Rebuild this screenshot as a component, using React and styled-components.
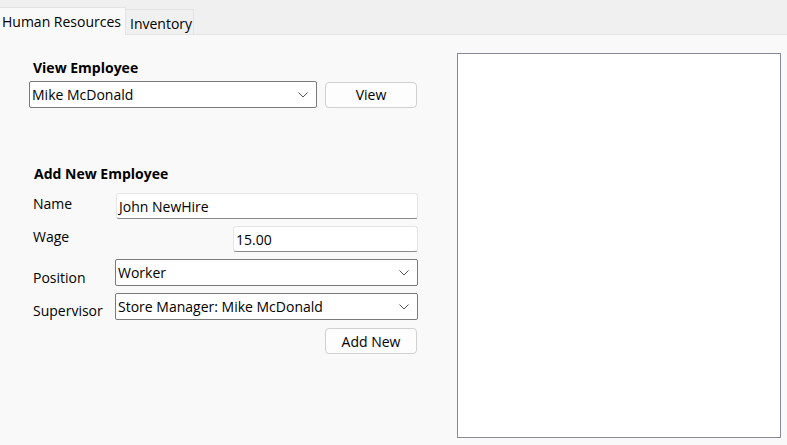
import React from "react";
import styled, { createGlobalStyle } from "styled-components";

const GlobalStyle = createGlobalStyle`
  html, body {
    margin: 0;
    padding: 0;
    background: #f9f9f9;
  }
  body {
    font-family: "Open Sans", "Noto Sans", sans-serif;
    font-size: 14px;
    color: #000;
  }
`;

const Window = styled.div`
  width: 787px;
  height: 445px;
  display: flex;
  flex-direction: column;
  background: #f9f9f9;
  overflow: hidden;
`;

const TabBar = styled.div`
  height: 35px;
  flex-shrink: 0;
  display: flex;
  align-items: flex-end;
  background: #f0f0f0;
  border-bottom: 1px solid #e3e3e3;
  box-sizing: border-box;
`;

const Tab = styled.div`
  height: ${(p) => (p.$active ? "28px" : "25px")};
  width: ${(p) => (p.$active ? "126px" : "69px")};
  padding-left: ${(p) => (p.$active ? "2px" : "4px")};
  padding-top: ${(p) => (p.$active ? "0" : "3px")};
  box-sizing: border-box;
  display: flex;
  align-items: center;
  background: ${(p) => (p.$active ? "#f9f9f9" : "#f0f0f0")};
  border: 1px solid #e3e3e3;
  border-bottom: none;
  border-left: ${(p) => (p.$active ? "none" : "1px solid #e3e3e3")};
  margin-bottom: ${(p) => (p.$active ? "-1px" : "0")};
  margin-left: ${(p) => (p.$active ? "0" : "-1px")};
  font-size: 14px;
  position: relative;
  z-index: ${(p) => (p.$active ? 1 : 0)};
`;

const Body = styled.div`
  flex: 1;
  display: flex;
  padding: 18px 6px 7px 29px;
  box-sizing: border-box;
`;

const LeftPane = styled.div`
  width: 389px;
  padding-top: 5px;
  display: flex;
  flex-direction: column;
`;

const Heading = styled.div`
  font-weight: 700;
  font-size: 14px;
  padding-left: ${(p) => p.$indent}px;
  margin-top: ${(p) => p.$top}px;
  height: 20px;
  line-height: 20px;
`;

const Row = styled.div`
  display: flex;
  align-items: center;
  gap: 8px;
  margin-top: 3px;
`;

const ComboBox = styled.div`
  width: ${(p) => p.$width}px;
  height: 27px;
  box-sizing: border-box;
  display: flex;
  align-items: center;
  justify-content: space-between;
  background: #fff;
  border: 1px solid #7a7a7a;
  border-radius: 2px;
  padding: 0 8px 0 2px;
  font-size: 14px;
`;

const Button = styled.button`
  width: 92px;
  height: 26px;
  box-sizing: border-box;
  background: #fdfdfd;
  border: 1px solid #d0d0d0;
  border-radius: 4px;
  font-family: inherit;
  font-size: 14px;
  color: #000;
  padding: 0;
  justify-self: end;
  margin-right: ${(p) => p.$right || 0}px;
  margin-top: ${(p) => p.$top || 0}px;
`;

const Form = styled.div`
  display: grid;
  grid-template-columns: 86px 303px;
  grid-template-rows: 26px 26px 27px 27px 26px;
  row-gap: 7px;
  margin-top: 9px;
`;

const Label = styled.div`
  padding-left: 4px;
  font-size: 14px;
  line-height: 20px;
  align-self: start;
  padding-top: ${(p) => p.$top}px;
  white-space: nowrap;
`;

const TextField = styled.div`
  width: ${(p) => p.$width}px;
  justify-self: end;
  height: 26px;
  box-sizing: border-box;
  display: flex;
  align-items: center;
  background: #fff;
  border: 1px solid #e5e5e5;
  border-bottom: 1px solid #8a8a8a;
  border-radius: 3px;
  padding: 0 2px;
  font-size: 14px;
`;

const Preview = styled.div`
  flex: 1;
  margin-left: 39px;
  background: #fff;
  border: 1px solid #878a94;
`;

const Chevron = () => (
  <svg width="10" height="6" viewBox="0 0 10 6" fill="none">
    <path d="M0.5 0.5 L5 5 L9.5 0.5" stroke="#555" strokeWidth="1" />
  </svg>
);

export default function App() {
  return (
    <>
      <GlobalStyle />
      <Window>
        <TabBar>
          <Tab $active>Human Resources</Tab>
          <Tab>Inventory</Tab>
        </TabBar>
        <Body>
          <LeftPane>
            <Heading $indent={4} $top={0}>View Employee</Heading>
            <Row>
              <ComboBox $width={288}>
                <span>Mike McDonald</span>
                <Chevron />
              </ComboBox>
              <Button>View</Button>
            </Row>
            <Heading $indent={5} $top={56}>Add New Employee</Heading>
            <Form>
              <Label $top={1}>Name</Label>
              <TextField $width={302}>John NewHire</TextField>
              <Label $top={1}>Wage</Label>
              <TextField $width={185}>15.00</TextField>
              <Label $top={9}>Position</Label>
              <ComboBox $width={303}>
                <span>Worker</span>
                <Chevron />
              </ComboBox>
              <Label $top={8}>Supervisor</Label>
              <ComboBox $width={303}>
                <span>Store Manager: Mike McDonald</span>
                <Chevron />
              </ComboBox>
              <span />
              <Button $right={1} $top={1}>Add New</Button>
            </Form>
          </LeftPane>
          <Preview />
        </Body>
      </Window>
    </>
  );
}
